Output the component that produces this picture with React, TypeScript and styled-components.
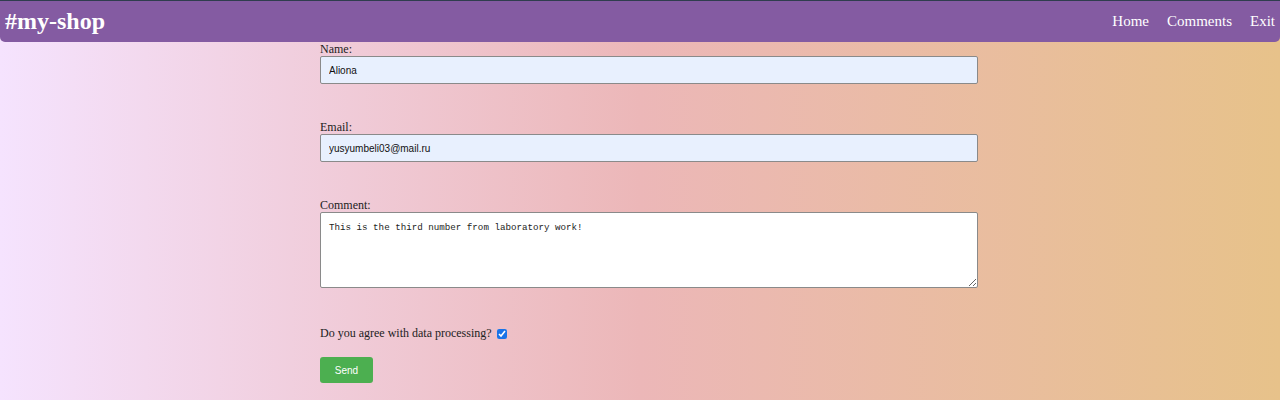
import React from "react";
import styled, { createGlobalStyle } from "styled-components";

const Global = createGlobalStyle`
  html, body { margin: 0; padding: 0; }
  body {
    font-family: "Liberation Serif", "Times New Roman", serif;
    background: linear-gradient(to right, #f5e3fe 0%, #ecb7b8 50%, #e7c28a 100%);
    min-height: 400px;
    color: #222;
  }
`;

const Header = styled.header`
  display: flex;
  align-items: center;
  justify-content: space-between;
  height: 41px;
  border-top: 1px solid #2f3d4e;
  background: #845ba2;
  border-radius: 0 0 5px 5px;
  padding: 0 5px;
`;

const Logo = styled.div`
  color: #fff;
  font-weight: bold;
  font-size: 24px;
`;

const Nav = styled.nav`
  display: flex;
  gap: 18px;
`;

const NavLink = styled.a`
  color: #fff;
  font-size: 15px;
  text-decoration: none;
`;

const Form = styled.form`
  margin-left: 25%;
  width: 50%;
  display: flex;
  flex-direction: column;
`;

const Field = styled.div<{ $gap: number }>`
  display: flex;
  flex-direction: column;
  margin-bottom: ${(p) => p.$gap}px;
`;

const Label = styled.label`
  font-size: 12px;
  line-height: 14px;
`;

const Input = styled.input`
  box-sizing: content-box;
  width: 100%;
  height: 26px;
  padding: 0 8px;
  border: 1px solid #8a8a8a;
  border-radius: 2px;
  background: #e8f0fe;
  font-family: "Liberation Sans", Arial, sans-serif;
  font-size: 10px;
  color: #111;
  outline: none;
`;

const TextArea = styled.textarea`
  box-sizing: content-box;
  width: 100%;
  height: 58px;
  padding: 9px 8px 7px;
  border: 1px solid #8a8a8a;
  border-radius: 2px;
  background: #fff;
  font-family: "Liberation Mono", "Courier New", monospace;
  font-size: 9.2px;
  color: #222;
  resize: both;
  margin: 0;
`;

const CheckRow = styled.div`
  display: flex;
  align-items: center;
  gap: 5px;
  font-size: 12px;
  margin-top: 38px;
`;

const Check = styled.input`
  width: 10px;
  height: 10px;
  margin: 0;
  accent-color: #1a73e8;
`;

const SendButton = styled.button`
  align-self: flex-start;
  margin-top: 16px;
  width: 53px;
  height: 26px;
  border: none;
  border-radius: 3px;
  background: #4caf50;
  color: #fff;
  font-family: "Liberation Sans", Arial, sans-serif;
  font-size: 10px;
`;

export default function App() {
  return (
    <>
      <Global />
      <Header>
        <Logo>#my-shop</Logo>
        <Nav>
          <NavLink href="#">Home</NavLink>
          <NavLink href="#">Comments</NavLink>
          <NavLink href="#">Exit</NavLink>
        </Nav>
      </Header>
      <Form onSubmit={(e) => e.preventDefault()}>
        <Field $gap={36}>
          <Label>Name:</Label>
          <Input defaultValue="Aliona" />
        </Field>
        <Field $gap={36}>
          <Label>Email:</Label>
          <Input defaultValue="yusyumbeli03@mail.ru" />
        </Field>
        <Field $gap={0}>
          <Label>Comment:</Label>
          <TextArea defaultValue="This is the third number from laboratory work!" spellCheck />
        </Field>
        <CheckRow>
          <span>Do you agree with data processing?</span>
          <Check type="checkbox" defaultChecked />
        </CheckRow>
        <SendButton type="submit">Send</SendButton>
      </Form>
    </>
  );
}
